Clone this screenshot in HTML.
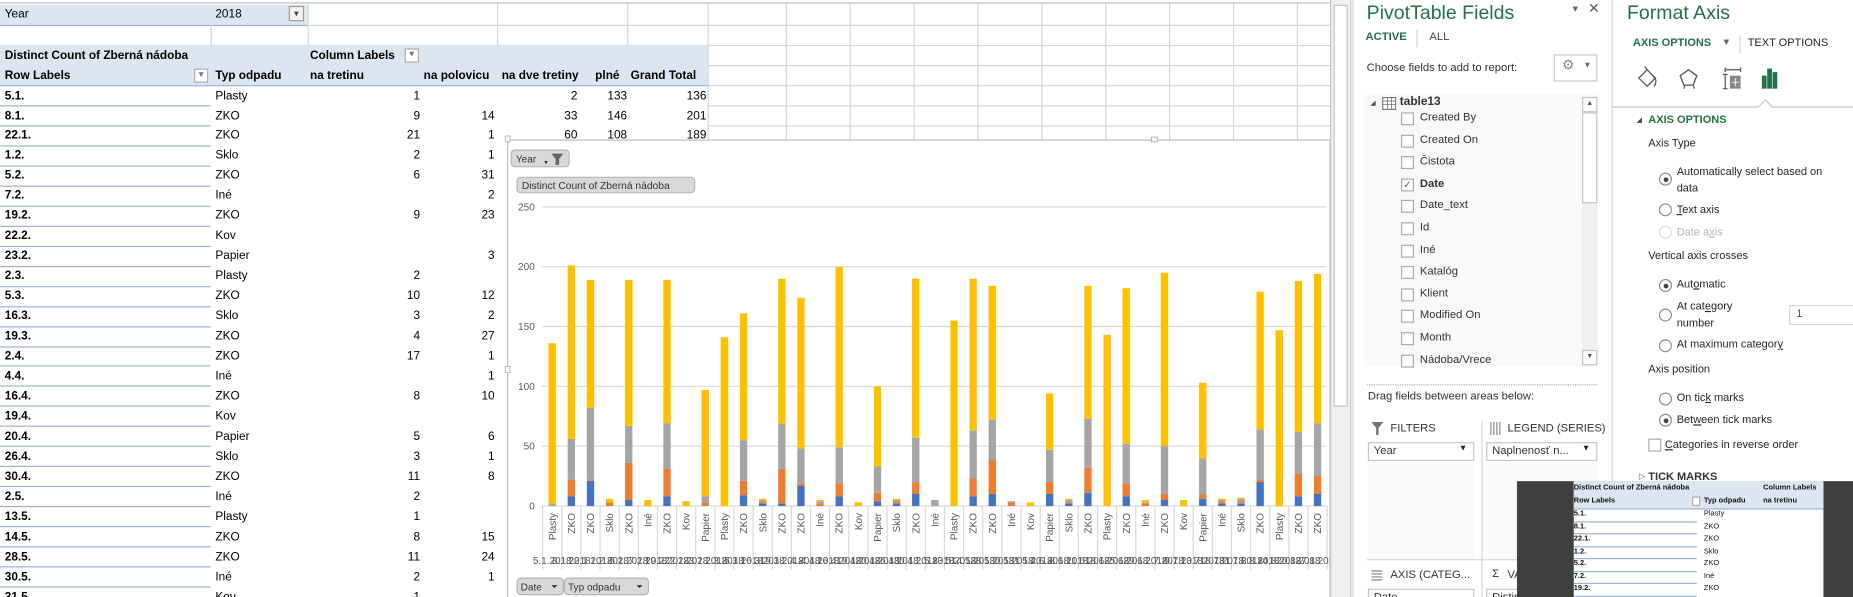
<!DOCTYPE html>
<html><head><meta charset="utf-8"><style>
*{margin:0;padding:0;box-sizing:border-box}
html,body{width:1853px;height:597px;overflow:hidden;background:#fff;font-family:"Liberation Sans",Arial,sans-serif}
#s{position:absolute;left:0;top:0;width:1566px;height:505px;transform:scale(1.18327,1.18218);transform-origin:0 0;overflow:hidden;background:#fff}
.a{position:absolute;white-space:nowrap}
.t{font-size:10px;color:#000;line-height:17px;height:17px}
.b{font-weight:bold}
.r{text-align:right}
.hl{position:absolute;height:1px;background:#d4d4d4}
.vl{position:absolute;width:1px;background:#d4d4d4}
.ul{position:absolute;height:1px;background:#95b3d7}
.pf{font-size:9.5px;color:#333}
.cb{position:absolute;width:11px;height:11px;border:1px solid #ababab;background:#fff}
.rd{position:absolute;width:11px;height:11px;border:1px solid #8a8a8a;border-radius:50%;background:#fff}
.rd.on::after{content:"";position:absolute;left:2.5px;top:2.5px;width:4px;height:4px;border-radius:50%;background:#444}
.fa{font-size:9.3px;color:#262626}
.m{font-size:6.3px;font-weight:bold;color:#111;line-height:10px}
</style></head><body><div id="s">

<div class="hl" style="left:0;top:2px;width:1124px;background:#bdbdbd"></div>
<div class="a" style="left:0;top:3.9px;width:260px;height:17px;background:#dce6f1"></div>
<div class="ul" style="left:0;top:20.5px;width:260px"></div>
<div class="hl" style="left:260px;top:20.5px;width:864px"></div>
<div class="hl" style="left:0;top:37.6px;width:1124px"></div>
<div class="vl" style="left:178px;top:21px;height:17px"></div>
<div class="vl" style="left:260px;top:3px;height:35px"></div>
<div class="hl" style="left:598px;top:54.8px;width:526px"></div>
<div class="hl" style="left:598px;top:71.9px;width:526px"></div>
<div class="hl" style="left:598px;top:89px;width:526px"></div>
<div class="hl" style="left:598px;top:106px;width:526px"></div>
<div class="vl" style="left:598px;top:3px;height:115px"></div>
<div class="vl" style="left:664px;top:3px;height:115px"></div>
<div class="vl" style="left:718px;top:3px;height:115px"></div>
<div class="vl" style="left:772px;top:3px;height:115px"></div>
<div class="vl" style="left:826px;top:3px;height:115px"></div>
<div class="vl" style="left:880px;top:3px;height:115px"></div>
<div class="vl" style="left:934px;top:3px;height:115px"></div>
<div class="vl" style="left:988px;top:3px;height:115px"></div>
<div class="vl" style="left:1042px;top:3px;height:115px"></div>
<div class="vl" style="left:1096px;top:3px;height:115px"></div>
<div class="vl" style="left:420px;top:3px;height:35px"></div>
<div class="vl" style="left:530px;top:3px;height:35px"></div>

<div class="a t" style="left:4px;top:4px">Year</div>
<div class="a t" style="left:182px;top:4px">2018</div>
<div class="a" style="left:244px;top:5px;width:13px;height:13px;border:1px solid #9b9b9b;background:#f2f2f2;font-size:8px;text-align:center;line-height:11px;color:#444">▾</div>

<div class="a" style="left:0;top:38.2px;width:598px;height:34.3px;background:#dce6f1"></div>
<div class="ul" style="left:0;top:72px;width:598px"></div>
<div class="a t b" style="left:4px;top:38.5px">Distinct Count of Zberná nádoba</div>
<div class="a t b" style="left:262px;top:38.5px">Column Labels</div>
<div class="a" style="left:342px;top:41px;width:12px;height:12px;border:1px solid #aaa;background:#fff;font-size:7px;text-align:center;line-height:10px;color:#777">▼</div>
<div class="a t b" style="left:4px;top:55.6px">Row Labels</div>
<div class="a" style="left:164px;top:58px;width:12px;height:12px;border:1px solid #aaa;background:#fff;font-size:7px;text-align:center;line-height:10px;color:#777">▼</div>
<div class="a t b" style="left:182px;top:55.6px">Typ odpadu</div>
<div class="a t b" style="left:262px;top:55.6px">na tretinu</div>
<div class="a t b" style="left:358px;top:55.6px">na polovicu</div>
<div class="a t b" style="left:424px;top:55.6px">na dve tretiny</div>
<div class="a t b" style="left:503px;top:55.6px">plné</div>
<div class="a t b" style="left:533px;top:55.6px">Grand Total</div>

<div class="a t b" style="left:4px;top:72.5px">5.1.</div><div class="a t" style="left:182px;top:72.5px">Plasty</div><div class="a t r" style="left:300px;width:55px;top:72.5px">1</div><div class="a t r" style="left:430px;width:58px;top:72.5px">2</div><div class="a t r" style="left:500px;width:30px;top:72.5px">133</div><div class="a t r" style="left:540px;width:57px;top:72.5px">136</div>
<div class="a t b" style="left:4px;top:89.5px">8.1.</div><div class="a t" style="left:182px;top:89.5px">ZKO</div><div class="a t r" style="left:300px;width:55px;top:89.5px">9</div><div class="a t r" style="left:360px;width:58px;top:89.5px">14</div><div class="a t r" style="left:430px;width:58px;top:89.5px">33</div><div class="a t r" style="left:500px;width:30px;top:89.5px">146</div><div class="a t r" style="left:540px;width:57px;top:89.5px">201</div>
<div class="a t b" style="left:4px;top:106.4px">22.1.</div><div class="a t" style="left:182px;top:106.4px">ZKO</div><div class="a t r" style="left:300px;width:55px;top:106.4px">21</div><div class="a t r" style="left:360px;width:58px;top:106.4px">1</div><div class="a t r" style="left:430px;width:58px;top:106.4px">60</div><div class="a t r" style="left:500px;width:30px;top:106.4px">108</div><div class="a t r" style="left:540px;width:57px;top:106.4px">189</div>
<div class="a t b" style="left:4px;top:123.4px">1.2.</div><div class="a t" style="left:182px;top:123.4px">Sklo</div><div class="a t r" style="left:300px;width:55px;top:123.4px">2</div><div class="a t r" style="left:360px;width:58px;top:123.4px">1</div>
<div class="a t b" style="left:4px;top:140.3px">5.2.</div><div class="a t" style="left:182px;top:140.3px">ZKO</div><div class="a t r" style="left:300px;width:55px;top:140.3px">6</div><div class="a t r" style="left:360px;width:58px;top:140.3px">31</div>
<div class="a t b" style="left:4px;top:157.3px">7.2.</div><div class="a t" style="left:182px;top:157.3px">Iné</div><div class="a t r" style="left:360px;width:58px;top:157.3px">2</div>
<div class="a t b" style="left:4px;top:174.3px">19.2.</div><div class="a t" style="left:182px;top:174.3px">ZKO</div><div class="a t r" style="left:300px;width:55px;top:174.3px">9</div><div class="a t r" style="left:360px;width:58px;top:174.3px">23</div>
<div class="a t b" style="left:4px;top:191.2px">22.2.</div><div class="a t" style="left:182px;top:191.2px">Kov</div>
<div class="a t b" style="left:4px;top:208.2px">23.2.</div><div class="a t" style="left:182px;top:208.2px">Papier</div><div class="a t r" style="left:360px;width:58px;top:208.2px">3</div>
<div class="a t b" style="left:4px;top:225.1px">2.3.</div><div class="a t" style="left:182px;top:225.1px">Plasty</div><div class="a t r" style="left:300px;width:55px;top:225.1px">2</div>
<div class="a t b" style="left:4px;top:242.1px">5.3.</div><div class="a t" style="left:182px;top:242.1px">ZKO</div><div class="a t r" style="left:300px;width:55px;top:242.1px">10</div><div class="a t r" style="left:360px;width:58px;top:242.1px">12</div>
<div class="a t b" style="left:4px;top:259.1px">16.3.</div><div class="a t" style="left:182px;top:259.1px">Sklo</div><div class="a t r" style="left:300px;width:55px;top:259.1px">3</div><div class="a t r" style="left:360px;width:58px;top:259.1px">2</div>
<div class="a t b" style="left:4px;top:276px">19.3.</div><div class="a t" style="left:182px;top:276px">ZKO</div><div class="a t r" style="left:300px;width:55px;top:276px">4</div><div class="a t r" style="left:360px;width:58px;top:276px">27</div>
<div class="a t b" style="left:4px;top:293px">2.4.</div><div class="a t" style="left:182px;top:293px">ZKO</div><div class="a t r" style="left:300px;width:55px;top:293px">17</div><div class="a t r" style="left:360px;width:58px;top:293px">1</div>
<div class="a t b" style="left:4px;top:309.9px">4.4.</div><div class="a t" style="left:182px;top:309.9px">Iné</div><div class="a t r" style="left:360px;width:58px;top:309.9px">1</div>
<div class="a t b" style="left:4px;top:326.9px">16.4.</div><div class="a t" style="left:182px;top:326.9px">ZKO</div><div class="a t r" style="left:300px;width:55px;top:326.9px">8</div><div class="a t r" style="left:360px;width:58px;top:326.9px">10</div>
<div class="a t b" style="left:4px;top:343.9px">19.4.</div><div class="a t" style="left:182px;top:343.9px">Kov</div>
<div class="a t b" style="left:4px;top:360.8px">20.4.</div><div class="a t" style="left:182px;top:360.8px">Papier</div><div class="a t r" style="left:300px;width:55px;top:360.8px">5</div><div class="a t r" style="left:360px;width:58px;top:360.8px">6</div>
<div class="a t b" style="left:4px;top:377.8px">26.4.</div><div class="a t" style="left:182px;top:377.8px">Sklo</div><div class="a t r" style="left:300px;width:55px;top:377.8px">3</div><div class="a t r" style="left:360px;width:58px;top:377.8px">1</div>
<div class="a t b" style="left:4px;top:394.7px">30.4.</div><div class="a t" style="left:182px;top:394.7px">ZKO</div><div class="a t r" style="left:300px;width:55px;top:394.7px">11</div><div class="a t r" style="left:360px;width:58px;top:394.7px">8</div>
<div class="a t b" style="left:4px;top:411.7px">2.5.</div><div class="a t" style="left:182px;top:411.7px">Iné</div><div class="a t r" style="left:300px;width:55px;top:411.7px">2</div>
<div class="a t b" style="left:4px;top:428.7px">13.5.</div><div class="a t" style="left:182px;top:428.7px">Plasty</div><div class="a t r" style="left:300px;width:55px;top:428.7px">1</div>
<div class="a t b" style="left:4px;top:445.6px">14.5.</div><div class="a t" style="left:182px;top:445.6px">ZKO</div><div class="a t r" style="left:300px;width:55px;top:445.6px">8</div><div class="a t r" style="left:360px;width:58px;top:445.6px">15</div>
<div class="a t b" style="left:4px;top:462.6px">28.5.</div><div class="a t" style="left:182px;top:462.6px">ZKO</div><div class="a t r" style="left:300px;width:55px;top:462.6px">11</div><div class="a t r" style="left:360px;width:58px;top:462.6px">24</div>
<div class="a t b" style="left:4px;top:479.5px">30.5.</div><div class="a t" style="left:182px;top:479.5px">Iné</div><div class="a t r" style="left:300px;width:55px;top:479.5px">2</div><div class="a t r" style="left:360px;width:58px;top:479.5px">1</div>
<div class="a t b" style="left:4px;top:496.5px">31.5.</div><div class="a t" style="left:182px;top:496.5px">Kov</div><div class="a t r" style="left:300px;width:55px;top:496.5px">1</div>

<div class="ul" style="left:0;top:89px;width:178px"></div>
<div class="ul" style="left:0;top:105.9px;width:178px"></div>
<div class="ul" style="left:0;top:122.9px;width:178px"></div>
<div class="ul" style="left:0;top:139.8px;width:178px"></div>
<div class="ul" style="left:0;top:156.8px;width:178px"></div>
<div class="ul" style="left:0;top:173.8px;width:178px"></div>
<div class="ul" style="left:0;top:190.7px;width:178px"></div>
<div class="ul" style="left:0;top:207.7px;width:178px"></div>
<div class="ul" style="left:0;top:224.6px;width:178px"></div>
<div class="ul" style="left:0;top:241.6px;width:178px"></div>
<div class="ul" style="left:0;top:258.6px;width:178px"></div>
<div class="ul" style="left:0;top:275.5px;width:178px"></div>
<div class="ul" style="left:0;top:292.5px;width:178px"></div>
<div class="ul" style="left:0;top:309.4px;width:178px"></div>
<div class="ul" style="left:0;top:326.4px;width:178px"></div>
<div class="ul" style="left:0;top:343.4px;width:178px"></div>
<div class="ul" style="left:0;top:360.3px;width:178px"></div>
<div class="ul" style="left:0;top:377.3px;width:178px"></div>
<div class="ul" style="left:0;top:394.2px;width:178px"></div>
<div class="ul" style="left:0;top:411.2px;width:178px"></div>
<div class="ul" style="left:0;top:428.2px;width:178px"></div>
<div class="ul" style="left:0;top:445.1px;width:178px"></div>
<div class="ul" style="left:0;top:462.1px;width:178px"></div>
<div class="ul" style="left:0;top:479px;width:178px"></div>
<div class="ul" style="left:0;top:496px;width:178px"></div>

<svg class="a" style="left:0;top:0" width="1566" height="505" viewBox="0 0 1566 505" font-family="Liberation Sans, Arial, sans-serif">
<rect x="429" y="118.5" width="695" height="400" fill="#fff" stroke="#bfbfbf"/>
<rect x="427" y="115" width="4" height="5" fill="#fff" stroke="#aaa" stroke-width=".7"/>
<rect x="427" y="310" width="4" height="5" fill="#fff" stroke="#aaa" stroke-width=".7"/>
<rect x="973" y="116" width="5" height="4" fill="#fff" stroke="#aaa" stroke-width=".7"/>
<g stroke="#d9d9d9" stroke-width="1">
<line x1="458" y1="175" x2="1121" y2="175"/><line x1="458" y1="225.6" x2="1121" y2="225.6"/><line x1="458" y1="276.2" x2="1121" y2="276.2"/><line x1="458" y1="326.8" x2="1121" y2="326.8"/><line x1="458" y1="377.4" x2="1121" y2="377.4"/><line x1="458" y1="428" x2="1121" y2="428"/>
</g>
<g font-size="8.5" fill="#595959" text-anchor="end">
<text x="452" y="178">250</text><text x="452" y="228.6">200</text><text x="452" y="279.2">150</text><text x="452" y="329.8">100</text><text x="452" y="380.4">50</text><text x="452" y="431">0</text>
</g>
<rect x="432" y="127" width="49" height="14" rx="3" fill="#d9d9d9" stroke="#b5b5b5"/>
<text x="436" y="137.5" font-size="8.5" fill="#333">Year</text>
<path d="M466 130h10l-3.5 4.5v5h-3v-5z" fill="#666"/><text x="460" y="139" font-size="6" fill="#333">▾</text>
<rect x="437" y="150" width="150" height="13" rx="3" fill="#d9d9d9" stroke="#b5b5b5"/>
<text x="441" y="160" font-size="8.7" fill="#333">Distinct Count of Zberná nádoba</text>
<g id="bars"></g>
<g id="seps" stroke="#d9d9d9"></g>
<g font-size="8.4" fill="#595959" text-anchor="end">
<text transform="translate(469.7,434) rotate(-90)">Plasty</text>
<text transform="translate(485.9,434) rotate(-90)">ZKO</text>
<text transform="translate(502,434) rotate(-90)">ZKO</text>
<text transform="translate(518.2,434) rotate(-90)">Sklo</text>
<text transform="translate(534.4,434) rotate(-90)">ZKO</text>
<text transform="translate(550.6,434) rotate(-90)">Iné</text>
<text transform="translate(566.7,434) rotate(-90)">ZKO</text>
<text transform="translate(582.9,434) rotate(-90)">Kov</text>
<text transform="translate(599.1,434) rotate(-90)">Papier</text>
<text transform="translate(615.2,434) rotate(-90)">Plasty</text>
<text transform="translate(631.4,434) rotate(-90)">ZKO</text>
<text transform="translate(647.6,434) rotate(-90)">Sklo</text>
<text transform="translate(663.7,434) rotate(-90)">ZKO</text>
<text transform="translate(679.9,434) rotate(-90)">ZKO</text>
<text transform="translate(696.1,434) rotate(-90)">Iné</text>
<text transform="translate(712.2,434) rotate(-90)">ZKO</text>
<text transform="translate(728.4,434) rotate(-90)">Kov</text>
<text transform="translate(744.6,434) rotate(-90)">Papier</text>
<text transform="translate(760.8,434) rotate(-90)">Sklo</text>
<text transform="translate(776.9,434) rotate(-90)">ZKO</text>
<text transform="translate(793.1,434) rotate(-90)">Iné</text>
<text transform="translate(809.3,434) rotate(-90)">Plasty</text>
<text transform="translate(825.4,434) rotate(-90)">ZKO</text>
<text transform="translate(841.6,434) rotate(-90)">ZKO</text>
<text transform="translate(857.8,434) rotate(-90)">Iné</text>
<text transform="translate(873.9,434) rotate(-90)">Kov</text>
<text transform="translate(890.1,434) rotate(-90)">Papier</text>
<text transform="translate(906.3,434) rotate(-90)">Sklo</text>
<text transform="translate(922.5,434) rotate(-90)">ZKO</text>
<text transform="translate(938.6,434) rotate(-90)">Plasty</text>
<text transform="translate(954.8,434) rotate(-90)">ZKO</text>
<text transform="translate(971,434) rotate(-90)">Iné</text>
<text transform="translate(987.1,434) rotate(-90)">ZKO</text>
<text transform="translate(1003.3,434) rotate(-90)">Kov</text>
<text transform="translate(1019.5,434) rotate(-90)">Papier</text>
<text transform="translate(1035.6,434) rotate(-90)">Iné</text>
<text transform="translate(1051.8,434) rotate(-90)">Sklo</text>
<text transform="translate(1068,434) rotate(-90)">ZKO</text>
<text transform="translate(1084.1,434) rotate(-90)">Plasty</text>
<text transform="translate(1100.3,434) rotate(-90)">ZKO</text>
<text transform="translate(1116.5,434) rotate(-90)">ZKO</text>
</g>
<g font-size="8.4" fill="#595959" text-anchor="middle">
<text x="466.7" y="477">5.1.2018</text><text x="482.9" y="477">8.1.2018</text><text x="499" y="477">22.1.2018</text><text x="515.2" y="477">1.2.2018</text><text x="531.4" y="477">5.2.2018</text><text x="547.6" y="477">7.2.2018</text><text x="563.7" y="477">19.2.2018</text><text x="579.9" y="477">22.2.2018</text><text x="596.1" y="477">23.2.2018</text><text x="612.2" y="477">2.3.2018</text><text x="628.4" y="477">5.3.2018</text><text x="644.6" y="477">16.3.2018</text><text x="660.7" y="477">19.3.2018</text><text x="676.9" y="477">2.4.2018</text><text x="693.1" y="477">4.4.2018</text><text x="709.2" y="477">16.4.2018</text><text x="725.4" y="477">19.4.2018</text><text x="741.6" y="477">20.4.2018</text><text x="757.8" y="477">26.4.2018</text><text x="773.9" y="477">30.4.2018</text><text x="790.1" y="477">2.5.2018</text><text x="806.3" y="477">13.5.2018</text><text x="822.4" y="477">14.5.2018</text><text x="838.6" y="477">28.5.2018</text><text x="854.8" y="477">30.5.2018</text><text x="870.9" y="477">31.5.2018</text><text x="887.1" y="477">4.6.2018</text><text x="903.3" y="477">8.6.2018</text><text x="919.5" y="477">11.6.2018</text><text x="935.6" y="477">18.6.2018</text><text x="951.8" y="477">25.6.2018</text><text x="968" y="477">29.6.2018</text><text x="984.1" y="477">2.7.2018</text><text x="1000.3" y="477">9.7.2018</text><text x="1016.5" y="477">13.7.2018</text><text x="1032.6" y="477">18.7.2018</text><text x="1048.8" y="477">31.7.2018</text><text x="1065" y="477">8.8.2018</text><text x="1081.1" y="477">14.8.2018</text><text x="1097.3" y="477">20.8.2018</text><text x="1113.5" y="477">27.8.2018</text>
</g>
<rect x="437" y="489" width="39" height="14" rx="3" fill="#d9d9d9" stroke="#b5b5b5"/>
<text x="440" y="499.5" font-size="8.5" fill="#333">Date</text><path d="M466 495h5l-2.5 2.5z" fill="#333"/>
<rect x="477" y="489" width="71" height="14" rx="3" fill="#d9d9d9" stroke="#b5b5b5"/>
<text x="480" y="499.5" font-size="8.5" fill="#333">Typ odpadu</text><path d="M538 495h5l-2.5 2.5z" fill="#333"/>
</svg>

<div class="a" style="left:1124px;top:0;width:18px;height:505px;background:#f0f0f0;border-left:1px solid #c8c8c8;border-right:1px solid #c8c8c8"></div>
<div class="a" style="left:1127px;top:4px;width:12px;height:340px;background:#fff;border:1px solid #c2c2c2"></div>

<div class="a" style="left:1143px;top:0;width:220px;height:505px;background:#fff;border-left:1px solid #d4d4d4"></div>
<div class="a" style="left:1155px;top:2px;font-size:16.5px;color:#217346;font-weight:300">PivotTable Fields</div>
<div class="a" style="left:1329px;top:2px;font-size:9px;color:#666">▾</div>
<div class="a" style="left:1342px;top:0px;font-size:12px;color:#555">✕</div>
<div class="a" style="left:1154px;top:26px;font-size:9.5px;color:#217346;font-weight:bold">ACTIVE</div>
<div class="a" style="left:1197px;top:25px;width:1px;height:15px;background:#d4d4d4"></div>
<div class="a" style="left:1208px;top:26px;font-size:9.5px;color:#444">ALL</div>
<div class="a pf" style="left:1155px;top:52px">Choose fields to add to report:</div>
<div class="a" style="left:1313px;top:46px;width:37px;height:23px;border:1px solid #c6c6c6;background:#fff"></div>
<div class="a" style="left:1320px;top:48px;font-size:12px;color:#888">⚙</div>
<div class="a" style="left:1338px;top:52px;font-size:7px;color:#666">▼</div>
<div class="a" style="left:1153px;top:80px;width:197px;height:230px;background:#f9f9f9"></div>
<div class="a" style="left:1337px;top:82px;width:13px;height:227px;background:#f0f0f0"></div>
<div class="a" style="left:1337px;top:82px;width:13px;height:13px;border:1px solid #c2c2c2;background:#fff;font-size:6px;text-align:center;line-height:11px;color:#555">▲</div>
<div class="a" style="left:1337px;top:95px;width:13px;height:77px;border:1px solid #c2c2c2;background:#fff"></div>
<div class="a" style="left:1337px;top:296px;width:13px;height:13px;border:1px solid #c2c2c2;background:#fff;font-size:6px;text-align:center;line-height:11px;color:#555">▼</div>
<div class="a" style="left:1158px;top:84px;font-size:6px;color:#555">◢</div>
<svg class="a" style="left:1168px;top:82px" width="12" height="12"><rect x=".5" y=".5" width="11" height="10" fill="#fff" stroke="#777"/><path d="M.5 3.5h11M.5 6.5h11M4.5 .5v10M8 .5v10" stroke="#777" stroke-width=".7"/></svg>
<div class="a" style="left:1183px;top:81px;font-size:10px;font-weight:bold;color:#333">table13</div>
<div class="cb" style="left:1184px;top:95px"></div><div class="a pf" style="left:1200px;top:94px">Created By</div>
<div class="cb" style="left:1184px;top:113.6px"></div><div class="a pf" style="left:1200px;top:112.6px">Created On</div>
<div class="cb" style="left:1184px;top:132.2px"></div><div class="a pf" style="left:1200px;top:131.2px">Čistota</div>
<div class="cb" style="left:1184px;top:150.8px;font-size:9px;line-height:9px;text-align:center;color:#666">✓</div><div class="a pf" style="left:1200px;top:149.8px;font-weight:bold">Date</div>
<div class="cb" style="left:1184px;top:169.4px"></div><div class="a pf" style="left:1200px;top:168.4px">Date_text</div>
<div class="cb" style="left:1184px;top:188px"></div><div class="a pf" style="left:1200px;top:187px">Id</div>
<div class="cb" style="left:1184px;top:206.6px"></div><div class="a pf" style="left:1200px;top:205.6px">Iné</div>
<div class="cb" style="left:1184px;top:225.2px"></div><div class="a pf" style="left:1200px;top:224.2px">Katalóg</div>
<div class="cb" style="left:1184px;top:243.8px"></div><div class="a pf" style="left:1200px;top:242.8px">Klient</div>
<div class="cb" style="left:1184px;top:262.4px"></div><div class="a pf" style="left:1200px;top:261.4px">Modified On</div>
<div class="cb" style="left:1184px;top:281px"></div><div class="a pf" style="left:1200px;top:280px">Month</div>
<div class="cb" style="left:1184px;top:299.6px"></div><div class="a pf" style="left:1200px;top:298.6px">Nádoba/Vrece</div>
<div class="a" style="left:1155px;top:325px;width:195px;border-top:1px dotted #aaa"></div>
<div class="a pf" style="left:1156px;top:330px">Drag fields between areas below:</div>
<svg class="a" style="left:1159px;top:357px" width="10" height="11"><path d="M0 0h10L6 5v6H4V5z" fill="#777"/></svg>
<div class="a pf" style="left:1175px;top:357px">FILTERS</div>
<svg class="a" style="left:1259px;top:357px" width="10" height="11"><path d="M1 0v11M3.5 0v11M6 0v11M8.5 0v11" stroke="#888"/></svg>
<div class="a pf" style="left:1274px;top:357px">LEGEND (SERIES)</div>
<div class="a" style="left:1252px;top:356px;width:1px;height:149px;background:#d4d4d4"></div>
<div class="a" style="left:1156px;top:391px;width:90px;height:82px;background:#fafafa"></div>
<div class="a" style="left:1256px;top:391px;width:94px;height:82px;background:#fafafa"></div>
<div class="a" style="left:1156px;top:374px;width:90px;height:16px;border:1px solid #c6c6c6;background:#fff"></div>
<div class="a pf" style="left:1161px;top:376px">Year</div><div class="a" style="left:1233px;top:376px;font-size:7px;color:#222">▼</div>
<div class="a" style="left:1256px;top:374px;width:94px;height:16px;border:1px solid #c6c6c6;background:#fff"></div>
<div class="a pf" style="left:1261px;top:376px">Naplnenosť n...</div><div class="a" style="left:1337px;top:376px;font-size:7px;color:#222">▼</div>
<div class="a" style="left:1155px;top:473px;width:195px;height:1px;background:#d4d4d4"></div>
<svg class="a" style="left:1159px;top:482px" width="10" height="10"><path d="M0 1h9M0 3.5h9M0 6h9M0 8.5h9" stroke="#888"/></svg>
<div class="a pf" style="left:1175px;top:481px">AXIS (CATEG...</div>
<div class="a pf" style="left:1261px;top:480px">Σ</div><div class="a pf" style="left:1274px;top:481px">VALUES</div>
<div class="a" style="left:1156px;top:498px;width:90px;height:16px;border:1px solid #c6c6c6;background:#fff"></div>
<div class="a pf" style="left:1161px;top:500px">Date</div>
<div class="a" style="left:1256px;top:498px;width:94px;height:16px;border:1px solid #c6c6c6;background:#fff"></div>
<div class="a pf" style="left:1261px;top:500px">Distinct</div>

<div class="a" style="left:1362px;top:0;width:1px;height:505px;background:#d4d4d4"></div>
<div class="a" style="left:1375px;top:2px;font-size:16.5px;color:#217346;font-weight:300">Format Axis</div>
<div class="a" style="left:1380px;top:31px;font-size:9.3px;color:#217346;font-weight:bold">AXIS OPTIONS</div>
<div class="a" style="left:1455px;top:31px;font-size:8px;color:#666">▼</div>
<div class="a" style="left:1470px;top:30px;width:1px;height:15px;background:#d4d4d4"></div>
<div class="a fa" style="left:1477px;top:31px">TEXT OPTIONS</div>
<svg class="a" style="left:1363px;top:56px" width="203" height="36">
<g transform="translate(20,0)">
<path d="M2 10l7-7 7 7-7 7z" fill="none" stroke="#555" stroke-width="1.1"/><path d="M9 3l-2-3M14 9c3 1 3 5 1 8" fill="none" stroke="#555" stroke-width="1.1"/>
<path d="M44 3l7 5-3 8h-8l-3-8z" fill="none" stroke="#555" stroke-width="1.1"/><path d="M41 16l-1 3M48 16l1 3" stroke="#555"/>
<path d="M75 3h13M75 1v4M88 1v4M75 7v12M73 7h4M73 19h4" stroke="#555" fill="none"/><rect x="79" y="8" width="9" height="11" fill="#888"/><path d="M83.5 10v7M80.5 13.5h6" stroke="#fff" stroke-width=".8"/>
<rect x="106" y="8" width="4" height="11" fill="#217346"/><rect x="110.5" y="2" width="4" height="17" fill="#217346"/><rect x="115" y="5" width="4" height="14" fill="#217346"/>
</g>
<path d="M0 34.5h123l6-6 6 6h70" fill="none" stroke="#c8c8c8"/>
</svg>
<div class="a" style="left:1383px;top:98px;font-size:6px;color:#444">◢</div>
<div class="a" style="left:1393px;top:96px;font-size:9.3px;color:#217346;font-weight:bold">AXIS OPTIONS</div>
<div class="a fa" style="left:1393px;top:116px">Axis Type</div>
<div class="rd on" style="left:1402px;top:146px"></div>
<div class="a fa" style="left:1417px;top:140px">Automatically select based on</div>
<div class="a fa" style="left:1417px;top:154px">data</div>
<div class="rd" style="left:1402px;top:172px"></div><div class="a fa" style="left:1417px;top:172px"><u>T</u>ext axis</div>
<div class="rd" style="left:1402px;top:191px;border-color:#ddd"></div><div class="a fa" style="left:1417px;top:191px;color:#b5b5b5">Date a<u>x</u>is</div>
<div class="a fa" style="left:1393px;top:211px">Vertical axis crosses</div>
<div class="rd on" style="left:1402px;top:236px"></div><div class="a fa" style="left:1417px;top:235px">Aut<u>o</u>matic</div>
<div class="rd" style="left:1402px;top:261px"></div><div class="a fa" style="left:1417px;top:254px">At cat<u>e</u>gory</div>
<div class="a fa" style="left:1417px;top:268px">number</div>
<div class="a" style="left:1512px;top:258px;width:60px;height:17px;border:1px solid #d4d4d4;background:#fff"></div>
<div class="a fa" style="left:1518px;top:260px;color:#555">1</div>
<div class="rd" style="left:1402px;top:287px"></div><div class="a fa" style="left:1417px;top:286px">At maximum categor<u>y</u></div>
<div class="a fa" style="left:1393px;top:307px">Axis position</div>
<div class="rd" style="left:1402px;top:332px"></div><div class="a fa" style="left:1417px;top:331px">On tic<u>k</u> marks</div>
<div class="rd on" style="left:1402px;top:350px"></div><div class="a fa" style="left:1417px;top:350px">Bet<u>w</u>een tick marks</div>
<div class="cb" style="left:1393px;top:371px;border-color:#aaa"></div><div class="a fa" style="left:1407px;top:371px"><u>C</u>ategories in reverse order</div>
<div class="a" style="left:1385px;top:399px;font-size:7px;color:#666">▷</div>
<div class="a" style="left:1393px;top:398px;font-size:9.3px;color:#333;font-weight:bold">TICK MARKS</div>

<div class="a" style="left:1282px;top:407px;width:290px;height:100px;background:#3f3f3f"></div>
<div class="a" style="left:1330px;top:407px;width:211px;height:100px;background:#fff"></div>
<div class="a" style="left:1330px;top:407px;width:211px;height:23px;background:#dce6f1"></div>
<div class="a m" style="left:1330px;top:408px">Distinct Count of Zberná nádoba</div>
<div class="a m" style="left:1490px;top:408px">Column Labels</div>
<div class="a m" style="left:1330px;top:419px">Row Labels</div>
<div class="a" style="left:1430px;top:420px;width:7px;height:8px;border:1px solid #aaa;background:#fff"></div>
<div class="a m" style="left:1440px;top:419px">Typ odpadu</div>
<div class="a m" style="left:1490px;top:419px">na tretinu</div>
<div class="ul" style="left:1330px;top:430px;width:211px"></div>
<div class="a m" style="left:1330px;top:430px">5.1.</div><div class="a m" style="left:1440px;top:430px;font-weight:normal">Plasty</div>
<div class="a m" style="left:1330px;top:440.5px">8.1.</div><div class="a m" style="left:1440px;top:440.5px;font-weight:normal">ZKO</div>
<div class="a m" style="left:1330px;top:451px">22.1.</div><div class="a m" style="left:1440px;top:451px;font-weight:normal">ZKO</div>
<div class="a m" style="left:1330px;top:461.5px">1.2.</div><div class="a m" style="left:1440px;top:461.5px;font-weight:normal">Sklo</div>
<div class="a m" style="left:1330px;top:472px">5.2.</div><div class="a m" style="left:1440px;top:472px;font-weight:normal">ZKO</div>
<div class="a m" style="left:1330px;top:482.5px">7.2.</div><div class="a m" style="left:1440px;top:482.5px;font-weight:normal">Iné</div>
<div class="a m" style="left:1330px;top:493px">19.2.</div><div class="a m" style="left:1440px;top:493px;font-weight:normal">ZKO</div>
<div class="ul" style="left:1330px;top:440.5px;width:104px"></div>
<div class="ul" style="left:1330px;top:451px;width:104px"></div>
<div class="ul" style="left:1330px;top:461.5px;width:104px"></div>
<div class="ul" style="left:1330px;top:472px;width:104px"></div>
<div class="ul" style="left:1330px;top:482.5px;width:104px"></div>
<div class="ul" style="left:1330px;top:493px;width:104px"></div>
<div class="ul" style="left:1330px;top:503.5px;width:104px"></div>

</div>
<script>
var D=[[0,0,2,136],[8,22,56,201],[21,22,82,189],[0,3,3,6],[5,36,67,189],[0,0,0,5],[8,31,69,189],[0,0,0,4],[0,3,8,97],[0,0,0,141],[9,21,55,161],[2,4,5,6],[2,31,69,190],[17,19,48,174],[0,2,4,5],[8,19,49,200],[0,0,0,3],[4,11,33,100],[2,4,5,6],[10,20,57,190],[0,0,5,5],[0,0,0,155],[8,23,63,190],[10,38,72,184],[0,3,4,4],[0,0,0,3],[10,20,47,94],[2,3,5,6],[11,32,73,184],[0,0,0,143],[8,19,52,182],[0,2,3,5],[5,10,50,195],[0,0,0,5],[6,10,40,103],[2,4,5,6],[2,4,6,7],[20,22,64,179],[0,0,0,147],[8,27,62,188],[10,25,69,194]];
var C=["#4472c4","#ed7d31","#a5a5a5","#ffc000"],ns="http://www.w3.org/2000/svg",g=document.getElementById("bars"),sp=document.getElementById("seps"),k=253/250;
D.forEach(function(d,i){var cx=458.6+16.17*(i+.5),p=0;for(var j=0;j<4;j++){var h=d[j]-p;if(h>0){var r=document.createElementNS(ns,"rect");r.setAttribute("x",cx-3.1);r.setAttribute("width",6.2);r.setAttribute("y",428-d[j]*k);r.setAttribute("height",h*k);r.setAttribute("fill",C[j]);g.appendChild(r);}p=Math.max(p,d[j]);}});
for(var i=0;i<=41;i++){var x=458.6+16.17*i,l=document.createElementNS(ns,"line");l.setAttribute("x1",x);l.setAttribute("x2",x);l.setAttribute("y1",428);l.setAttribute("y2",482);sp.appendChild(l);}
</script>
</body></html>
